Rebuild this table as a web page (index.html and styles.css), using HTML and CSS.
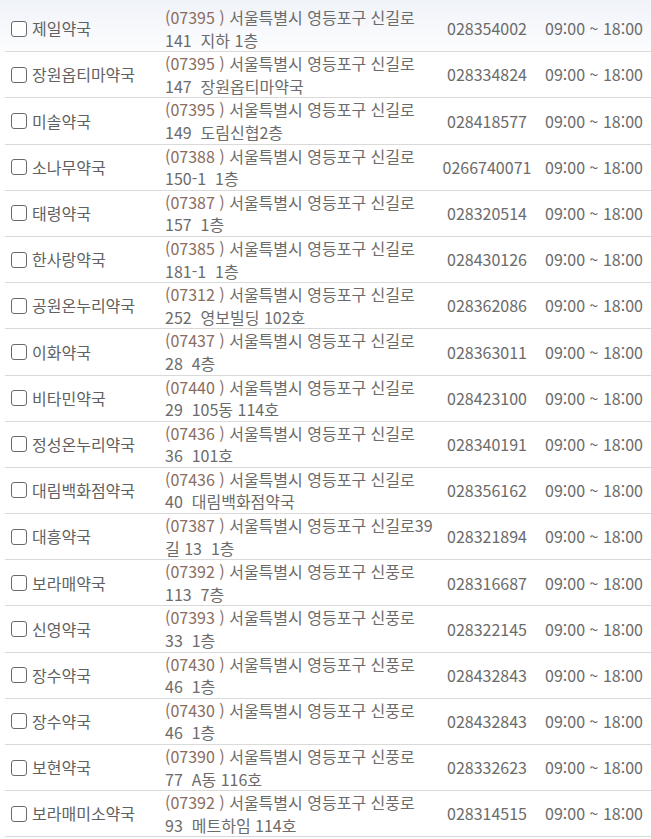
FILE: index.html
```html
<!DOCTYPE html>
<html lang="ko">

<head>
    <meta charset="UTF-8">
    <meta name="viewport" content="width=device-width, initial-scale=1.0">
    <title>약국 목록</title>
    <link rel="stylesheet" href="styles.css">
</head>

<body>
    <div class="list">
        <table class="pharm">
            <colgroup>
                <col class="c_name">
                <col class="c_addr">
                <col class="c_tel">
                <col class="c_time">
            </colgroup>
            <tbody>
                <tr class="on">
                    <td class="name"><label><input type="checkbox" class="chk">제일약국</label></td>
                    <td class="addr"><span class="ln"><em>(07395 )</em> 서울특별시 영등포구 신길로</span><span class="ln">141&nbsp; 지하 1층</span></td>
                    <td class="tel">028354002</td>
                    <td class="time">09:00 ~ 18:00</td>
                </tr>
                <tr>
                    <td class="name"><label><input type="checkbox" class="chk">장원옵티마약국</label></td>
                    <td class="addr"><span class="ln"><em>(07395 )</em> 서울특별시 영등포구 신길로</span><span class="ln">147&nbsp; 장원옵티마약국</span></td>
                    <td class="tel">028334824</td>
                    <td class="time">09:00 ~ 18:00</td>
                </tr>
                <tr>
                    <td class="name"><label><input type="checkbox" class="chk">미솔약국</label></td>
                    <td class="addr"><span class="ln"><em>(07395 )</em> 서울특별시 영등포구 신길로</span><span class="ln">149&nbsp; 도림신협2층</span></td>
                    <td class="tel">028418577</td>
                    <td class="time">09:00 ~ 18:00</td>
                </tr>
                <tr>
                    <td class="name"><label><input type="checkbox" class="chk">소나무약국</label></td>
                    <td class="addr"><span class="ln"><em>(07388 )</em> 서울특별시 영등포구 신길로</span><span class="ln">150-1&nbsp; 1층</span></td>
                    <td class="tel">0266740071</td>
                    <td class="time">09:00 ~ 18:00</td>
                </tr>
                <tr>
                    <td class="name"><label><input type="checkbox" class="chk">태령약국</label></td>
                    <td class="addr"><span class="ln"><em>(07387 )</em> 서울특별시 영등포구 신길로</span><span class="ln">157&nbsp; 1층</span></td>
                    <td class="tel">028320514</td>
                    <td class="time">09:00 ~ 18:00</td>
                </tr>
                <tr>
                    <td class="name"><label><input type="checkbox" class="chk">한사랑약국</label></td>
                    <td class="addr"><span class="ln"><em>(07385 )</em> 서울특별시 영등포구 신길로</span><span class="ln">181-1&nbsp; 1층</span></td>
                    <td class="tel">028430126</td>
                    <td class="time">09:00 ~ 18:00</td>
                </tr>
                <tr>
                    <td class="name"><label><input type="checkbox" class="chk">공원온누리약국</label></td>
                    <td class="addr"><span class="ln"><em>(07312 )</em> 서울특별시 영등포구 신길로</span><span class="ln">252&nbsp; 영보빌딩 102호</span></td>
                    <td class="tel">028362086</td>
                    <td class="time">09:00 ~ 18:00</td>
                </tr>
                <tr>
                    <td class="name"><label><input type="checkbox" class="chk">이화약국</label></td>
                    <td class="addr"><span class="ln"><em>(07437 )</em> 서울특별시 영등포구 신길로</span><span class="ln">28&nbsp; 4층</span></td>
                    <td class="tel">028363011</td>
                    <td class="time">09:00 ~ 18:00</td>
                </tr>
                <tr>
                    <td class="name"><label><input type="checkbox" class="chk">비타민약국</label></td>
                    <td class="addr"><span class="ln"><em>(07440 )</em> 서울특별시 영등포구 신길로</span><span class="ln">29&nbsp; 105동 114호</span></td>
                    <td class="tel">028423100</td>
                    <td class="time">09:00 ~ 18:00</td>
                </tr>
                <tr>
                    <td class="name"><label><input type="checkbox" class="chk">정성온누리약국</label></td>
                    <td class="addr"><span class="ln"><em>(07436 )</em> 서울특별시 영등포구 신길로</span><span class="ln">36&nbsp; 101호</span></td>
                    <td class="tel">028340191</td>
                    <td class="time">09:00 ~ 18:00</td>
                </tr>
                <tr>
                    <td class="name"><label><input type="checkbox" class="chk">대림백화점약국</label></td>
                    <td class="addr"><span class="ln"><em>(07436 )</em> 서울특별시 영등포구 신길로</span><span class="ln">40&nbsp; 대림백화점약국</span></td>
                    <td class="tel">028356162</td>
                    <td class="time">09:00 ~ 18:00</td>
                </tr>
                <tr>
                    <td class="name"><label><input type="checkbox" class="chk">대흥약국</label></td>
                    <td class="addr"><span class="ln"><em>(07387 )</em> 서울특별시 영등포구 신길로39</span><span class="ln">길 13&nbsp; 1층</span></td>
                    <td class="tel">028321894</td>
                    <td class="time">09:00 ~ 18:00</td>
                </tr>
                <tr>
                    <td class="name"><label><input type="checkbox" class="chk">보라매약국</label></td>
                    <td class="addr"><span class="ln"><em>(07392 )</em> 서울특별시 영등포구 신풍로</span><span class="ln">113&nbsp; 7층</span></td>
                    <td class="tel">028316687</td>
                    <td class="time">09:00 ~ 18:00</td>
                </tr>
                <tr>
                    <td class="name"><label><input type="checkbox" class="chk">신영약국</label></td>
                    <td class="addr"><span class="ln"><em>(07393 )</em> 서울특별시 영등포구 신풍로</span><span class="ln">33&nbsp; 1층</span></td>
                    <td class="tel">028322145</td>
                    <td class="time">09:00 ~ 18:00</td>
                </tr>
                <tr>
                    <td class="name"><label><input type="checkbox" class="chk">장수약국</label></td>
                    <td class="addr"><span class="ln"><em>(07430 )</em> 서울특별시 영등포구 신풍로</span><span class="ln">46&nbsp; 1층</span></td>
                    <td class="tel">028432843</td>
                    <td class="time">09:00 ~ 18:00</td>
                </tr>
                <tr>
                    <td class="name"><label><input type="checkbox" class="chk">장수약국</label></td>
                    <td class="addr"><span class="ln"><em>(07430 )</em> 서울특별시 영등포구 신풍로</span><span class="ln">46&nbsp; 1층</span></td>
                    <td class="tel">028432843</td>
                    <td class="time">09:00 ~ 18:00</td>
                </tr>
                <tr>
                    <td class="name"><label><input type="checkbox" class="chk">보현약국</label></td>
                    <td class="addr"><span class="ln"><em>(07390 )</em> 서울특별시 영등포구 신풍로</span><span class="ln">77&nbsp; A동 116호</span></td>
                    <td class="tel">028332623</td>
                    <td class="time">09:00 ~ 18:00</td>
                </tr>
                <tr>
                    <td class="name"><label><input type="checkbox" class="chk">보라매미소약국</label></td>
                    <td class="addr"><span class="ln"><em>(07392 )</em> 서울특별시 영등포구 신풍로</span><span class="ln">93&nbsp; 메트하임 114호</span></td>
                    <td class="tel">028314515</td>
                    <td class="time">09:00 ~ 18:00</td>
                </tr>
            </tbody>
        </table>
    </div>
</body>

</html>
```

FILE: styles.css
```css
* {
    margin: 0;
    padding: 0;
}

html {
    overflow: hidden;
}

body {
    font-family: "Noto Sans CJK KR", "Noto Sans", sans-serif;
    font-size: 16px;
    color: #6b6b6b;
    background: #fff linear-gradient(to bottom, #f0f3f9, #fcfdfe 52px, #fff 52px) no-repeat;
}

.list {
    padding: 6px 0 0 5px;
}

.pharm {
    width: 646px;
    border-collapse: collapse;
    table-layout: fixed;
}

.c_name {
    width: 155px;
}

.c_addr {
    width: 277px;
}

.c_tel {
    width: 100px;
}

.c_time {
    width: 114px;
}

.pharm td {
    border-bottom: 1px solid #dadada;
    line-height: 22.6px;
    vertical-align: middle;
    white-space: nowrap;
}

.name label {
    display: flex;
    align-items: center;
    gap: 5px;
    padding-left: 6px;
    color: #616161;
}

.chk {
    appearance: none;
    -webkit-appearance: none;
    width: 16px;
    height: 16px;
    border: 1.6px solid #6a6a6a;
    border-radius: 3px;
    background: #fff;
}

.addr {
    padding-left: 5px;
}

.addr .ln {
    display: block;
}

.addr em {
    font-style: normal;
    color: #8b6d5f;
}

.tel,
.time {
    text-align: center;
}
```
